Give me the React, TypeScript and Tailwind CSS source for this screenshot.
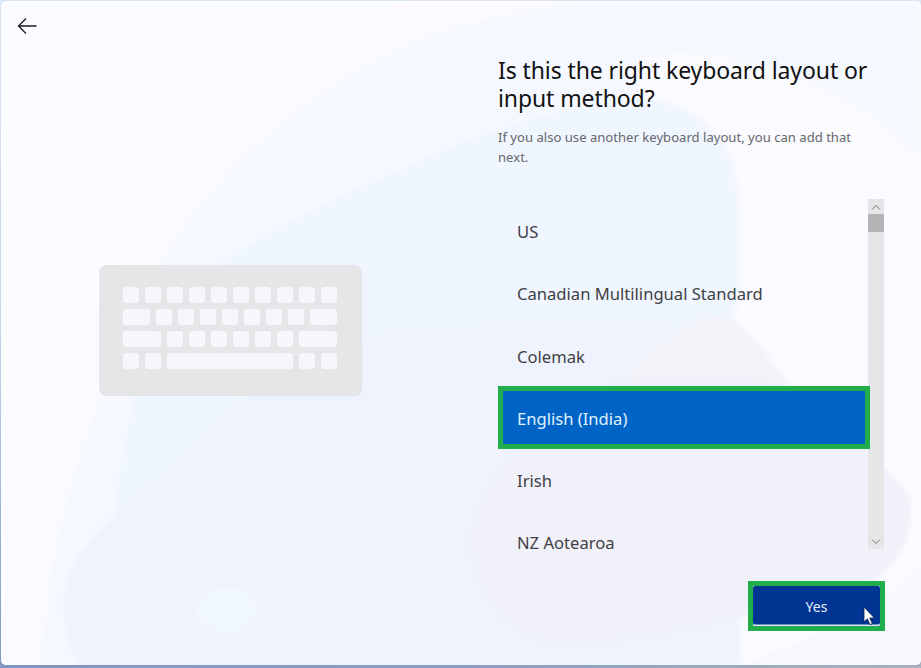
import React from 'react';

const layouts = ['US', 'Canadian Multilingual Standard', 'Colemak', 'English (India)', 'Irish', 'NZ Aotearoa'];

const Key = ({ className = 'w-4' }: { className?: string }) => (
  <div className={`h-4 rounded-[3px] bg-[#f5f7fb] ${className}`} />
);

const Keyboard = () => (
  <div className="flex h-[130px] w-[262px] flex-col gap-[6px] rounded-[7px] bg-[#e6e6e9] pl-6 pt-[22px] shadow-[1px_1px_1px_#dfdfe6]">
    <div className="flex gap-[6px]">
      {Array.from({ length: 10 }).map((_, i) => (
        <Key key={i} />
      ))}
    </div>
    <div className="flex gap-[6px]">
      <Key className="w-[27px]" />
      {Array.from({ length: 7 }).map((_, i) => (
        <Key key={i} />
      ))}
      <Key className="w-[27px]" />
    </div>
    <div className="flex gap-[6px]">
      <Key className="w-[38px]" />
      {Array.from({ length: 6 }).map((_, i) => (
        <Key key={i} />
      ))}
      <Key className="w-[38px]" />
    </div>
    <div className="flex gap-[6px]">
      <Key />
      <Key />
      <Key className="w-[126px]" />
      <Key />
      <Key />
    </div>
  </div>
);

const Cursor = () => (
  <svg className="absolute left-[110px] top-[20px]" width="13" height="20" viewBox="0 0 13 20">
    <path d="M1 1v15l3.4-3.2 2.5 5.8 2.4-1-2.5-5.6h4.6z" fill="#fff" stroke="#10204a" strokeWidth="0.8" />
  </svg>
);

export default function App() {
  return (
    <div className="relative h-[668px] w-[921px] overflow-hidden bg-gradient-to-b from-[#dbe6f4] via-[#c5d5ea] to-[#8298c2] font-['Noto_Sans','Open_Sans',sans-serif]">
      <div className="absolute inset-x-0 bottom-0 h-[8px] bg-gradient-to-r from-[#7f97c3] via-[#8a9dc2] to-[#aab0bc]" />
      <div className="absolute bottom-[3px] left-px right-0 top-px overflow-hidden rounded-[5px] bg-[#fbfcff]">
        {/* background swirls */}
        <svg className="absolute -left-px -top-px blur-[2px]" width="921" height="668" viewBox="0 0 921 668">
          <path d="M0 668C10 560 40 460 67 400C100 290 170 150 300 60C340 30 380 0 420 0H921V668Z" fill="#fafaff" />
          <path d="M43 668C40 600 70 470 100 400C130 300 200 170 330 90C400 40 470 10 640 0H921V668Z" fill="#f5f9ff" />
          <path d="M921 160C880 110 800 70 735 60C700 50 660 50 640 60V668H921Z" fill="#fafaff" />
          <path d="M176 300C200 270 300 210 400 170C470 135 560 105 640 100C690 100 720 130 735 170C742 240 740 300 730 340L500 668H100C110 500 130 360 176 300Z" fill="#f0f6ff" />
          <path d="M80 668C60 640 60 590 70 573C90 530 120 510 147 490C180 460 210 430 240 400C300 350 380 330 460 330C560 320 660 320 740 340V668Z" fill="#eff3fd" />
          <path d="M472 535C475 480 560 400 627 379C660 345 690 317 716 317C745 317 770 360 790 385C830 425 880 450 910 500C915 550 890 590 800 605C720 620 640 643 560 643C510 640 470 590 472 535Z" fill="#f0f1f9" />
          <path d="M627 379C660 345 690 317 716 317C745 317 770 360 790 385C730 370 680 370 627 379Z" fill="#f4f3f8" />
          <path d="M740 668C790 640 880 620 921 560V668Z" fill="#f7f8fe" />
          <ellipse cx="227" cy="610" rx="30" ry="23" fill="#f1f7ff" />
        </svg>
      </div>

      <div className="relative flex h-full">
        <div className="flex w-[498px] flex-col pl-[17px] pt-[17px]">
          <svg width="20" height="18" viewBox="0 0 20 18" fill="none" stroke="#1a1a1a" strokeWidth="1.3">
            <path d="M19.5 9H1.5M9 1.5 1.5 9 9 16.5" />
          </svg>
          <div className="ml-[82px] mt-[230px]">
            <Keyboard />
          </div>
        </div>

        <div className="flex w-[423px] flex-col pt-[56px]">
          <h1 className="w-[385px] text-[23px] font-normal leading-[28px] tracking-[-0.1px] text-[#111]">
            Is this the right keyboard layout or input method?
          </h1>
          <p className="mt-[15px] w-[370px] text-[13.1px] leading-[20px] text-[#66676c]">
            If you also use another keyboard layout, you can add that next.
          </p>

          <div className="mt-[32px] flex h-[350px] w-[386px]">
            <ul className="w-[370px] shrink-0 pt-[2px]">
              {layouts.map((name) => {
                const selected = name === 'English (India)';
                return (
                  <li
                    key={name}
                    className={
                      selected
                        ? 'relative z-10 -mt-[2.4px] mb-[1.4px] flex h-[63px] w-[372px] items-center border-[5px] border-[#21ad4b] bg-[#0063c6] pl-[14px] pt-[5px] text-[16.6px] text-[#dff2ff]'
                        : 'flex h-[62.4px] items-center pl-[19px] text-[16.6px] text-[#404045]'
                    }
                  >
                    {name}
                  </li>
                );
              })}
            </ul>
            <div className="flex w-4 shrink-0 flex-col bg-[#e6e6e8]">
              <div className="flex h-[15px] items-center justify-center">
                <svg width="10" height="6" viewBox="0 0 10 6" fill="none" stroke="#77777b">
                  <path d="M1 5.5 5 1.5l4 4" />
                </svg>
              </div>
              <div className="h-[18px] bg-[#b5b5b8]" />
              <div className="flex-1" />
              <div className="flex h-[15px] items-center justify-center">
                <svg width="10" height="6" viewBox="0 0 10 6" fill="none" stroke="#77777b">
                  <path d="M1 .5l4 4 4-4" />
                </svg>
              </div>
            </div>
          </div>

          <div className="mt-[32px] flex w-[387px] justify-end">
            <div className="h-[50px] w-[137px] border-[5px] border-[#21ad4b] bg-[#f2f5fc]">
              <button className="relative h-full w-full rounded-[2px] bg-[#003594] text-[14px] text-[#e6eefa] shadow-[inset_0_-1.5px_0_#dbe6f2]">
                Yes
                <Cursor />
              </button>
            </div>
          </div>
        </div>
      </div>
    </div>
  );
}
